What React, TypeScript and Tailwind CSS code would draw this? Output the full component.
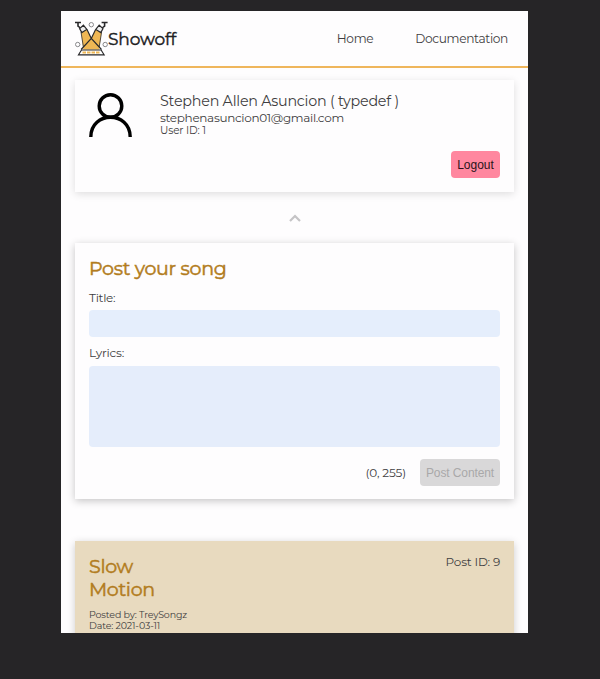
import React from "react";

function SpotlightLogo() {
  return (
    <svg width="35" height="35" viewBox="0 0 35 35" fill="none" stroke="#29292b" strokeWidth="1.2" className="shrink-0">
      <path d="M6 11 12 8.5 16.3 17.5 20.6 8.5 26.6 11 24.2 28.5H8.4z" fill="#efb754" stroke="none" />
      <path d="M12 8.5 16.3 17.5 26.5 28.5M20.6 8.5 16.3 17.5 6.1 28.5" />
      <path d="M6 11 8.4 26M26.6 11 24.2 26" strokeWidth="0.8" />
      <path d="M0 1.5h6M3 1.5v3.5l2.5 2M32.6 1.5h-6M29.6 1.5v3.5l-2.5 2" strokeWidth="1.6" />
      <path d="m4.6 7.6 3.8-3.4 3.4 4.2-5 3.2zM28 7.6l-3.8-3.4-3.4 4.2 5 3.2z" fill="#eeeeef" />
      <path d="M6.5 29h19.6l3 4.8H3.5z" fill="#fff" />
      <path d="M7.5 31.5h18" stroke="#efb754" strokeWidth="2.2" strokeDasharray="3.5 1" />
      <g strokeWidth="1" stroke="#88888b">
        <circle cx="16.3" cy="3.7" r="2.2" />
        <circle cx="2.7" cy="23.5" r="2.2" />
        <circle cx="30.2" cy="23.5" r="2.2" />
      </g>
    </svg>
  );
}

function Header() {
  return (
    <header className="flex h-[57px] shrink-0 items-center border-b-2 border-[#efb65c] pl-[14px] pr-5">
      <SpotlightLogo />
      <span className="-ml-0.5 text-[17px] leading-5 tracking-[-0.15px] text-[#202022] [-webkit-text-stroke:0.4px_#202022]">Showoff</span>
      <nav className="ml-auto flex gap-[42px] text-[12.2px] leading-4 tracking-[-0.35px]">
        <a>Home</a>
        <a>Documentation</a>
      </nav>
    </header>
  );
}

function ProfileCard() {
  return (
    <section className="mt-3 flex h-[112px] shrink-0 bg-[#fefdfe] px-3.5 pt-[13px] shadow-[0_2px_8px_rgba(0,0,0,0.13)]">
      <svg width="44" height="44" viewBox="0 0 44 44" fill="none" stroke="#000" strokeWidth="3.4" className="shrink-0">
        <circle cx="21.5" cy="13" r="11.3" />
        <path d="M1.8 44C1.8 17.7 41.2 17.7 41.2 44" />
      </svg>
      <div className="ml-[27px] flex grow flex-col whitespace-nowrap">
        <div className="text-[14.3px] leading-[17px] tracking-[-0.22px]">Stephen Allen Asuncion ( typedef )</div>
        <div className="text-[12px] leading-[15px] tracking-[-0.32px]">stephenasuncion01@gmail.com</div>
        <div className="text-[10.5px] leading-[12px] tracking-[-0.15px]">User ID: 1</div>
        <button className="mt-[14px] h-[27px] w-[49px] self-end rounded-[4px] bg-[#ff879f] font-['Liberation_Sans',sans-serif] text-[12px] text-[#2a1519]">Logout</button>
      </div>
    </section>
  );
}

function PostForm() {
  return (
    <section className="h-[256px] shrink-0 bg-[#fefdfe] px-3.5 pt-[14px] shadow-[0_2px_8px_rgba(0,0,0,0.23)]">
      <h2 className="text-[19px] leading-6 tracking-[-0.3px] text-[#b27c20] [-webkit-text-stroke:0.5px_#b27c20]">Post your song</h2>
      <label className="mt-[9px] block text-[12px] leading-4 tracking-[-0.25px]">Title:</label>
      <input className="mt-1 block h-[27px] w-full rounded-[4px] bg-[#e5eefc]" />
      <label className="mt-2 block text-[12px] leading-4 tracking-[-0.25px]">Lyrics:</label>
      <textarea className="mt-[5px] block h-[81px] w-full resize-none rounded-[4px] bg-[#e5edfb]" />
      <div className="mt-3 flex items-center justify-end gap-3.5">
        <span className="text-[12px] tracking-[-0.15px]">(0, 255)</span>
        <button disabled className="h-[27px] w-20 rounded-[4px] bg-[#d9d8d9] font-['Liberation_Sans',sans-serif] text-[12px] tracking-[-0.1px] text-[#a9a8a9]">Post Content</button>
      </div>
    </section>
  );
}

function SongPost() {
  return (
    <article className="mt-[42px] h-[112px] shrink-0 bg-[#e8dabf] px-3.5 pt-[14px] shadow-[0_2px_8px_rgba(0,0,0,0.2)]">
      <div className="flex items-start justify-between">
        <h2 className="w-20 text-[19px] leading-[23px] tracking-[-0.3px] text-[#b27c20] [-webkit-text-stroke:0.5px_#b27c20]">Slow Motion</h2>
        <span className="text-[12px] leading-[14px] tracking-[-0.2px]">Post ID: 9</span>
      </div>
      <div className="mt-2 text-[9.5px] leading-[11px] tracking-[-0.15px]">Posted by: TreySongz</div>
      <div className="text-[9.5px] leading-[11px] tracking-[-0.15px]">Date: 2021-03-11</div>
    </article>
  );
}

export default function App() {
  return (
    <div className="h-[679px] w-[600px] overflow-hidden bg-[#262527] pt-[11px] pl-[61px] font-['Montserrat','Inter',sans-serif] text-[#3f3e41]">
      <div className="flex h-[622px] w-[467px] flex-col overflow-hidden bg-[#fefdfe]">
        <Header />
        <main className="flex flex-col pr-3.5 pl-3.5">
          <ProfileCard />
          <div className="flex h-[51px] shrink-0 items-center justify-center">
            <svg width="12" height="8" viewBox="0 0 12 8" fill="none" stroke="#c5c4c6" strokeWidth="2.2">
              <path d="m1 7 5-5 5 5" />
            </svg>
          </div>
          <PostForm />
          <SongPost />
        </main>
      </div>
    </div>
  );
}
